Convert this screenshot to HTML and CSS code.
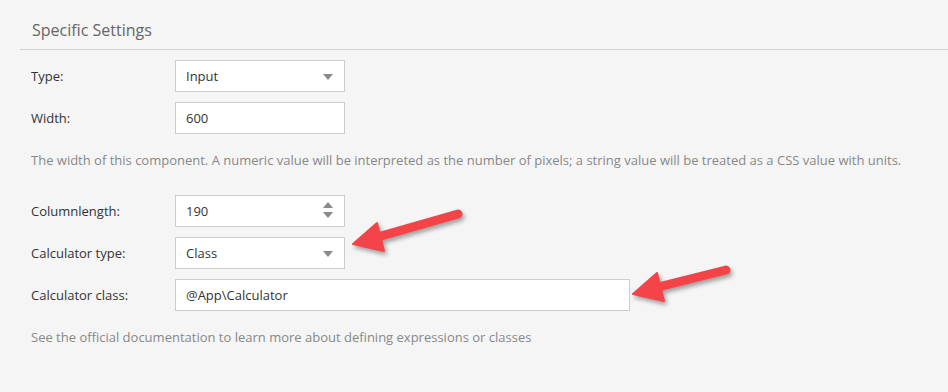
FILE: index.html
```html
<!DOCTYPE html>
<html lang="en">
<head>
    <meta charset="UTF-8">
    <meta name="viewport" content="width=device-width, initial-scale=1.0">
    <title>Specific Settings</title>
    <link rel="stylesheet" href="styles.css">
</head>
<body>

<div class="panel">
    <h3 class="panel-title">Specific Settings</h3>

    <div class="form">
        <div class="row">
            <label>Type:</label>
            <div class="field select">Input<span class="caret"></span></div>
        </div>
        <div class="row">
            <label>Width:</label>
            <input class="field" type="text" value="600">
        </div>
        <p class="hint">The width of this component. A numeric value will be interpreted as the number of pixels; a string value will be treated as a CSS value with units.</p>

        <div class="row">
            <label>Columnlength:</label>
            <div class="field number">190
                <span class="spin">
                    <span class="spin-up"></span>
                    <span class="spin-down"></span>
                </span>
            </div>
        </div>
        <div class="row">
            <label>Calculator type:</label>
            <div class="field select">Class<span class="caret"></span></div>
        </div>
        <div class="row">
            <label>Calculator class:</label>
            <input class="field wide" type="text" value="@App\Calculator">
        </div>
        <p class="hint">See the official documentation to learn more about defining expressions or classes</p>
    </div>
</div>

<!-- annotation arrows drawn on top of the screenshot -->
<svg class="arrows" width="948" height="392" viewBox="0 0 948 392">
    <g class="arrow">
        <line x1="374" y1="238" x2="458" y2="214" />
        <polygon points="353,244 377,223 384,251" />
    </g>
    <g class="arrow">
        <line x1="654" y1="288" x2="726" y2="270" />
        <polygon points="633,294 657,273 664,301" />
    </g>
</svg>

</body>
</html>
```

FILE: styles.css
```css
* {
    margin: 0;
    padding: 0;
    box-sizing: border-box;
    font-family: "Open Sans", Arial, sans-serif;
}

body {
    background: #f5f5f5;
    width: 948px;
    height: 392px;
    overflow: hidden;
    position: relative;
}

.panel {
    padding-left: 20px;
}

.panel-title {
    font-size: 16px;
    font-weight: normal;
    line-height: 22px;
    color: #666;
    padding: 19px 0 8px 12px;
    border-bottom: 1px solid #d4d4d4;
}

.form {
    padding: 10px 0 0 11px;
}

.row {
    display: flex;
    align-items: center;
    height: 32px;
    margin-bottom: 10px;
}

.row label {
    width: 144px;
    font-size: 13px;
    color: #333;
}

.field {
    width: 170px;
    height: 32px;
    border: 1px solid #ccc;
    background: #fff;
    font-size: 13px;
    color: #333;
    padding: 0 10px;
    display: flex;
    align-items: center;
    position: relative;
    outline: none;
}

.field.wide {
    width: 455px;
}

.caret {
    position: absolute;
    right: 11px;
    top: 13px;
    border-left: 5px solid transparent;
    border-right: 5px solid transparent;
    border-top: 6px solid #8a8a8a;
}

.spin {
    position: absolute;
    right: 11px;
    top: 6px;
    display: flex;
    flex-direction: column;
    gap: 4px;
}

.spin-up {
    border-left: 5px solid transparent;
    border-right: 5px solid transparent;
    border-bottom: 6px solid #8a8a8a;
}

.spin-down {
    border-left: 5px solid transparent;
    border-right: 5px solid transparent;
    border-top: 6px solid #8a8a8a;
}

.hint {
    font-size: 13px;
    line-height: 18px;
    color: #888;
    margin: 17px 0 26px;
}

.arrows {
    position: absolute;
    left: 0;
    top: 0;
    pointer-events: none;
}

.arrow {
    filter: drop-shadow(2px 3px 2px rgba(0, 0, 0, 0.35));
}

.arrow line {
    stroke: #f44447;
    stroke-width: 9;
    stroke-linecap: round;
}

.arrow polygon {
    fill: #f44447;
    stroke: #f44447;
    stroke-width: 2;
    stroke-linejoin: round;
}
```
